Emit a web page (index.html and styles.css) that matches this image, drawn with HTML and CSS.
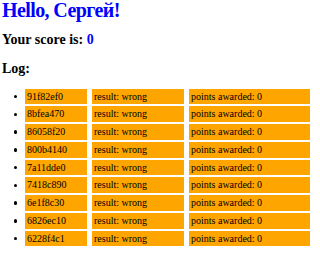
FILE: index.html
```html
<!DOCTYPE html>
<html lang="ru">
<head>
	<meta charset="UTF-8" />
	<title>Score</title>
	<link rel="stylesheet" href="styles.css">
</head>
<body>
	<h1 class="hello">Hello, Сергей!</h1>
	<h2 class="score">Your score is: <span class="num">0</span></h2>
	<h2 class="log-title">Log:</h2>
	<ul class="log">
		<li><div class="cell id">91f82ef0</div><div class="cell result">result: wrong</div><div class="cell points">points awarded: 0</div></li>
		<li><div class="cell id">8bfea470</div><div class="cell result">result: wrong</div><div class="cell points">points awarded: 0</div></li>
		<li><div class="cell id">86058f20</div><div class="cell result">result: wrong</div><div class="cell points">points awarded: 0</div></li>
		<li><div class="cell id">800b4140</div><div class="cell result">result: wrong</div><div class="cell points">points awarded: 0</div></li>
		<li><div class="cell id">7a11dde0</div><div class="cell result">result: wrong</div><div class="cell points">points awarded: 0</div></li>
		<li><div class="cell id">7418c890</div><div class="cell result">result: wrong</div><div class="cell points">points awarded: 0</div></li>
		<li><div class="cell id">6e1f8c30</div><div class="cell result">result: wrong</div><div class="cell points">points awarded: 0</div></li>
		<li><div class="cell id">6826ec10</div><div class="cell result">result: wrong</div><div class="cell points">points awarded: 0</div></li>
		<li><div class="cell id">6228f4c1</div><div class="cell result">result: wrong</div><div class="cell points">points awarded: 0</div></li>
	</ul>
</body>
</html>
```

FILE: styles.css
```css
body{
	margin: 0;
	padding: 0 2px;
	font-family: "Liberation Serif", "Times New Roman", serif;
	color: #000;
}

.hello{
	margin: 0;
	font-size: 20px;
	line-height: 20px;
	letter-spacing: -0.6px;
	color: #0000ff;
}

.score{
	margin: 13px 0 0;
	font-size: 14px;
	line-height: 14px;
}

.num{
	color: #0000ff;
}

.log-title{
	margin: 15px 0 0;
	font-size: 14px;
	line-height: 14px;
}

.log{
	margin: 12.7px 0 0;
	padding-left: 11.5px;
	list-style: none;
	font-size: 10px;
}

.log li{
	display: flex;
	align-items: center;
	gap: 5px;
	margin-bottom: 2px;
}

.log li::before{
	content: "";
	width: 3.5px;
	height: 3.5px;
	margin-right: 3px;
	border-radius: 50%;
	background-color: #000;
}

.cell{
	background-color: #ffa500;
	height: 15.75px;
	line-height: 15.75px;
	padding-left: 2px;
	box-sizing: border-box;
}

.id{
	width: 62px;
}

.result{
	width: 92px;
}

.points{
	width: 121px;
}
```
